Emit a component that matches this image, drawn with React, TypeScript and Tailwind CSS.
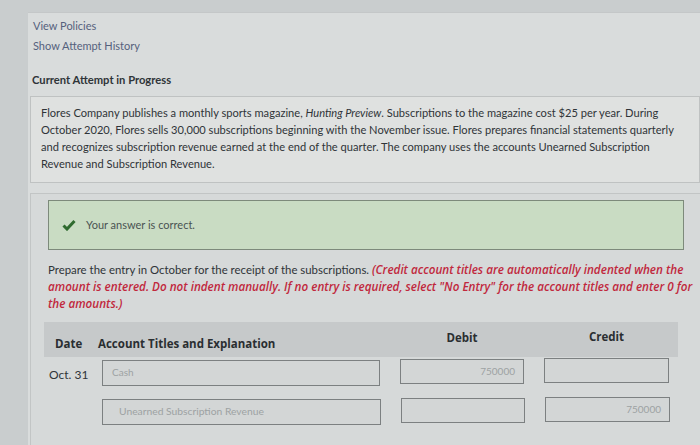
export default function App() {
  return (
    <div
      className="w-[700px] h-[445px] overflow-hidden flex bg-[#c9cdce] text-[#2f3438]"
      style={{ fontFamily: 'Lato, "Open Sans", sans-serif' }}
    >
      {/* left gutter */}
      <div className="w-[28px] shrink-0" />

      <div className="flex-1 flex flex-col bg-[#d9dcdc] border-t border-[#c4c7c8] mt-[12px]">
        {/* links */}
        <div className="pl-[5px] pt-[3px] text-[11px] text-[#55617c] leading-[20px]">
          <div>View Policies</div>
          <div>Show Attempt History</div>
        </div>

        <div className="pl-[4px] pt-[17px] text-[11.2px] font-bold leading-[14px]">
          Current Attempt in Progress
        </div>

        {/* question */}
        <div className="ml-[2px] mt-[9px] h-[87px] border border-[#bfc2c2] bg-[#dfe1e0] pl-[10px] pt-[7px] text-[11.1px] leading-[17px] whitespace-nowrap">
          Flores Company publishes a monthly sports magazine, <i>Hunting Preview</i>. Subscriptions to the magazine cost $25 per year. During
          <br />
          October 2020, Flores sells 30,000 subscriptions beginning with the November issue. Flores prepares financial statements quarterly
          <br />
          and recognizes subscription revenue earned at the end of the quarter. The company uses the accounts Unearned Subscription
          <br />
          Revenue and Subscription Revenue.
        </div>

        {/* answer panel */}
        <div className="ml-[2px] mt-[10px] flex-1 border-t border-l border-[#c2c5c5] bg-[#d6d9d9] pl-[17px] pt-[6px]">
          <div className="w-[636px] h-[50px] border border-[#7d8a7b] bg-[#c9dcc3] flex items-center pl-[13px] gap-[10px]">
            <svg width="14" height="12" viewBox="0 0 14 12">
              <path d="M1.5 6.5 L5 10 L12.5 2" fill="none" stroke="#2f6b2f" strokeWidth="3" />
            </svg>
            <span className="text-[11px] text-[#4a5352]">Your answer is correct.</span>
          </div>

          <div className="mt-[11px] text-[11.4px] leading-[17px] whitespace-nowrap">
            Prepare the entry in October for the receipt of the subscriptions.{' '}
            <span
              className="text-[#c1283d] italic font-semibold text-[11.7px]"
              style={{ fontFamily: '"Open Sans", sans-serif' }}
            >
              (Credit account titles are automatically indented when the
              <br />
              amount is entered. Do not indent manually. If no entry is required, select "No Entry" for the account titles and enter 0 for
              <br />
              the amounts.)
            </span>
          </div>

          {/* journal table */}
          <div
            className="mt-[10px] -ml-[4px] w-[634px] h-[35px] bg-[#c6c9ca] flex items-center text-[11.5px] font-bold text-[#2a2e31]"
            style={{ fontFamily: '"Open Sans", sans-serif' }}
          >
            <div className="w-[54px] pl-[11px] pt-[8px]">Date</div>
            <div className="w-[282px] pt-[8px] whitespace-nowrap">Account Titles and Explanation</div>
            <div className="ml-[20px] w-[124px] text-center pb-[3px]">Debit</div>
            <div className="ml-[20px] w-[125px] text-center pb-[6px]">Credit</div>
          </div>

          <div className="flex items-center mt-[2px] h-[27px]">
            <div className="w-[53px] ml-[1px] text-[12px] pt-[4px]">Oct. 31</div>
            <div className="w-[278px] h-[26px] border border-[#7c8081] bg-[#d3d6d6] flex items-center pl-[9px] text-[10px] text-[#9da2a3]">
              Cash
            </div>
            <div className="ml-[20px] w-[124px] h-[25px] border border-[#7c8081] bg-[#d3d6d6] flex items-center justify-end pr-[8px] text-[10px] text-[#9da2a3] -mt-[2px]">
              750000
            </div>
            <div className="ml-[20px] w-[125px] h-[25px] border border-[#7c8081] bg-[#d3d6d6] -mt-[5px]" />
          </div>

          <div className="flex items-center mt-[12px] h-[27px]">
            <div className="w-[54px]" />
            <div className="w-[279px] h-[26px] border border-[#7c8081] bg-[#d3d6d6] flex items-center pl-[16px] text-[10.3px] text-[#9da2a3]">
              Unearned Subscription Revenue
            </div>
            <div className="ml-[20px] w-[124px] h-[25px] border border-[#7c8081] bg-[#d3d6d6] -mt-[2px]" />
            <div className="ml-[20px] w-[125px] h-[25px] border border-[#7c8081] bg-[#d3d6d6] flex items-center justify-end pr-[8px] text-[10px] text-[#9da2a3] -mt-[5px]">
              750000
            </div>
          </div>
        </div>
      </div>
    </div>
  );
}
